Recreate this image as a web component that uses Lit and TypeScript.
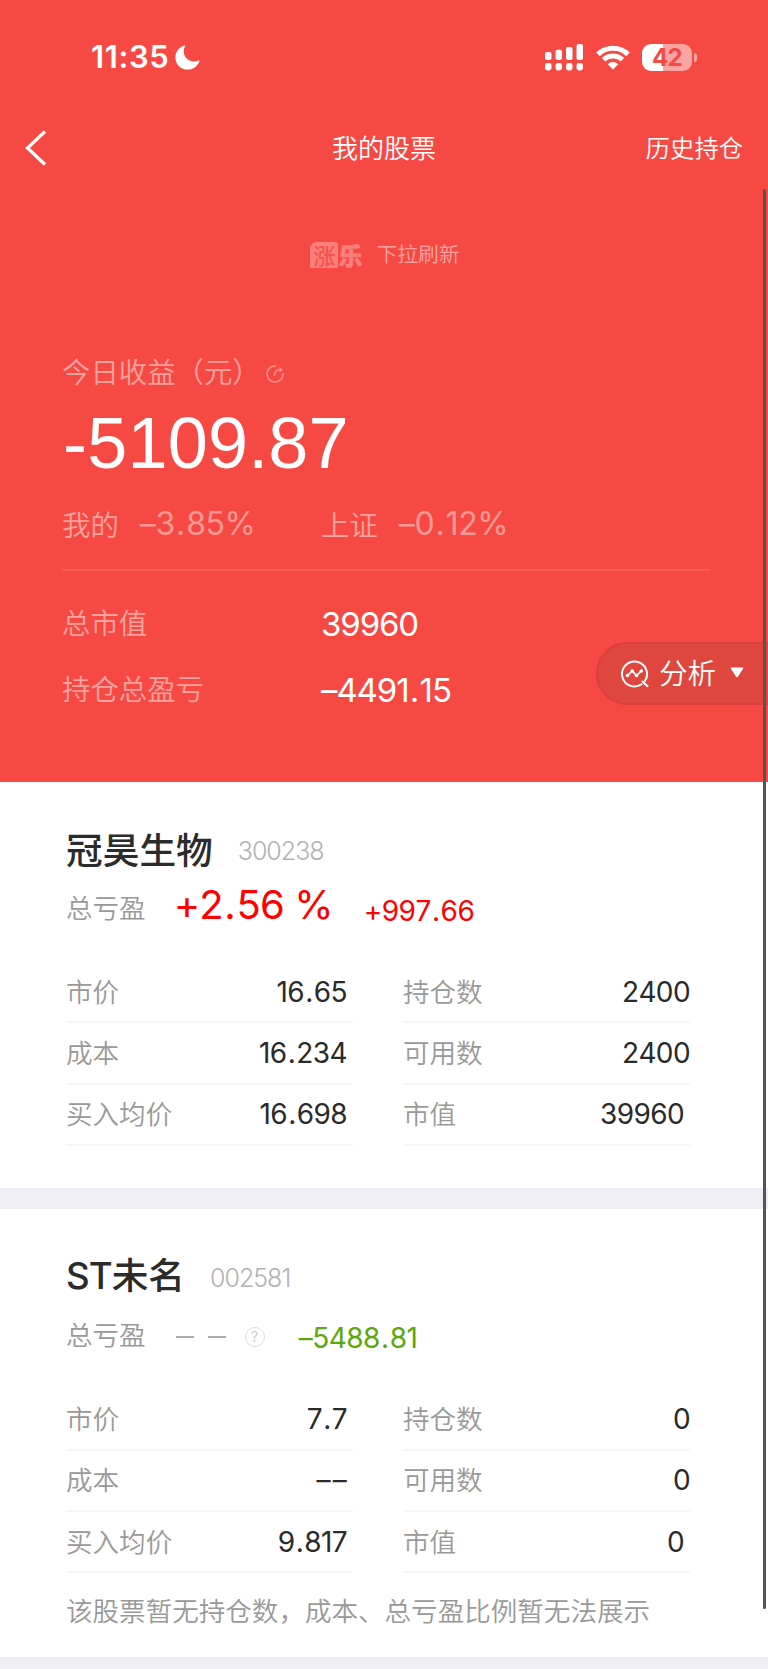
import { LitElement, html, css, svg } from "lit";
import { customElement, property } from "lit/decorators.js";
import { classMap } from "lit/directives/class-map.js";

interface Cell {
  label: string;
  value: string;
  inset?: boolean;
  empty?: boolean;
}

interface Holding {
  name: string;
  latin?: string;
  code: string;
  percent: string | null;
  amount: string;
  left: Cell[];
  right: Cell[];
  note?: string;
}

const HOLDINGS: Holding[] = [
  {
    name: "冠昊生物",
    code: "300238",
    percent: "+2.56 %",
    amount: "+997.66",
    left: [
      { label: "市价", value: "16.65" },
      { label: "成本", value: "16.234" },
      { label: "买入均价", value: "16.698" },
    ],
    right: [
      { label: "持仓数", value: "2400" },
      { label: "可用数", value: "2400" },
      { label: "市值", value: "39960", inset: true },
    ],
  },
  {
    latin: "ST",
    name: "未名",
    code: "002581",
    percent: null,
    amount: "–5488.81",
    left: [
      { label: "市价", value: "7.7" },
      { label: "成本", value: "––", empty: true },
      { label: "买入均价", value: "9.817" },
    ],
    right: [
      { label: "持仓数", value: "0" },
      { label: "可用数", value: "0" },
      { label: "市值", value: "0", inset: true },
    ],
    note: "该股票暂无持仓数，成本、总亏盈比例暂无法展示",
  },
];

const base = css`
  * {
    box-sizing: border-box;
  }
  :host {
    display: block;
    font-family: Inter, "Noto Sans CJK SC", sans-serif;
    font-kerning: none;
    white-space: nowrap;
  }
  svg {
    display: block;
    flex: none;
  }
  .zh {
    font-family: "Noto Sans CJK SC", sans-serif;
    font-weight: 350;
  }
  .dot {
    padding: 0 0.04em;
  }
`;

/** Splits a number at its decimal point so the point gets a little extra room. */
const num = (text: string) => {
  const [whole, fraction] = text.split(".");
  return fraction === undefined ? text : html`${whole}<span class="dot">.</span>${fraction}`;
};

@customElement("status-bar")
export class StatusBar extends LitElement {
  static styles = [
    base,
    css`
      .bar {
        height: 114px;
        padding: 0 71px 0 91px;
        display: flex;
        align-items: center;
        color: #fff;
      }
      .time {
        font-size: 31px;
        font-weight: 600;
        letter-spacing: 0.6px;
        line-height: 40px;
        width: 84px;
      }
      .grow {
        flex: 1;
      }
      .wifi {
        margin: 0 12px 0 13px;
      }
      .battery {
        width: 50px;
        height: 27px;
        border-radius: 9px;
        background: linear-gradient(90deg, #fff 21.5px, #fba4a1 21.5px);
        color: #f64944;
        font-size: 24px;
        font-weight: 700;
        line-height: 27px;
        text-align: center;
        letter-spacing: -0.6px;
      }
      .nub {
        width: 3px;
        height: 9px;
        margin-left: 2px;
        border-radius: 0 4px 4px 0;
        background: #fba4a1;
      }
    `,
  ];

  render() {
    const bars = [0, 1, 2, 3].map((i) => {
      const top = [8, 5.7, 3, 0][i];
      return svg`<rect x=${i * 10.5} y=${top} width="6.5" height=${16 - top} rx="2"/>
        <rect x=${i * 10.5} y="19" width="6.5" height="7.5" rx="2.4"/>`;
    });
    return html`<div class="bar">
      <span class="time">11:35</span>
      <svg width="25" height="25" viewBox="0 0 25 25" fill="#fff">
        <path d="M9.4 .5C4 2.3 .4 6.800 .4 12.400C.4 19.300 6 24.600 12.800 24.600C18.200 24.600 22.700 21.200 24.400 16.300C24.700 15.600 24.200 15.300 23.600 15.600C22.200 16.200 20.700 16.500 19.100 16.500C13.300 16.500 8.700 12 8.700 6.200C8.700 4.400 9.100 2.800 9.900 1.400C10.300 .7 10.100 .3 9.400 .5Z"/>
      </svg>
      <span class="grow"></span>
      <svg width="38" height="27" viewBox="0 0 38 27" fill="#fff">${bars}</svg>
      <svg class="wifi" width="34" height="25" viewBox="0 0 34 25" fill="none" stroke="#fff">
        <path d="M2 9.400A21.500 21.500 0 0 1 32 9.400" stroke-width="5"/>
        <path d="M7.600 14.800A13.500 13.500 0 0 1 26.400 14.800" stroke-width="4.800"/>
        <path d="M11.800 19.200A7.400 7.400 0 0 1 22.200 19.200L17 24.600Z" fill="#fff" stroke="none"/>
      </svg>
      <span class="battery">42</span><span class="nub"></span>
    </div>`;
  }
}

@customElement("profit-summary")
export class ProfitSummary extends LitElement {
  static styles = [
    base,
    css`
      .nav {
        height: 67px;
        display: grid;
        grid-template-columns: 1fr auto 1fr;
        align-items: center;
        padding: 0 25px;
        color: #fff;
      }
      .title {
        font-size: 26px;
        line-height: 36px;
        margin-top: -2px;
      }
      .history {
        justify-self: end;
        font-size: 24.300px;
        line-height: 36px;
        margin-top: -2px;
      }
      .pull {
        height: 30px;
        margin-top: 57px;
        padding-left: 2px;
        display: flex;
        justify-content: center;
        align-items: center;
        gap: 14px;
        color: rgba(255, 255, 255, 0.52);
        font-size: 20.800px;
        line-height: 30px;
      }
      .logo {
        display: flex;
        align-items: center;
        height: 26px;
        margin-top: 4px;
        font-weight: 900;
        color: #fa7f7b;
      }
      .stamp {
        width: 28px;
        height: 26px;
        border-radius: 7px 3px 1px 1px;
        background: #fa7f7b;
        font-size: 22px;
        line-height: 24px;
        text-align: center;
        font-weight: 500;
        color: #f6524d;
      }
      .mark {
        width: 24px;
        font-size: 24px;
        line-height: 22px;
        -webkit-text-stroke: 0.6px #fa7f7b;
      }
      .body {
        padding: 83px 58px 0 62px;
        color: rgba(255, 255, 255, 0.5);
        font-size: 28.400px;
        line-height: 40px;
      }
      .today {
        display: flex;
        align-items: center;
        height: 40px;
      }
      .refresh {
        margin: 5px 0 0 5px;
      }
      .total {
        height: 84px;
        padding: 19px 0 0 1px;
        font: 72px/84px "Liberation Sans", sans-serif;
        letter-spacing: 0.2px;
        color: #fff;
        display: flex;
        align-items: center;
      }
      .pair {
        display: grid;
        grid-template-columns: 259px 1fr;
        align-items: center;
      }
      .compare {
        height: 40px;
        margin-top: 28px;
      }
      .index {
        display: flex;
        align-items: center;
        gap: 21px;
      }
      .digits {
        font-size: 32px;
        letter-spacing: -0.4px;
        padding-top: 1px;
        color: rgba(255, 255, 255, 0.46);
      }
      .value {
        color: #fff;
        font-size: 33px;
        letter-spacing: -1.1px;
        padding-top: 4px;
      }
      .rule {
        height: 2px;
        margin: 26px 0 18px;
        background: rgba(255, 255, 255, 0.1);
      }
      .line {
        height: 66px;
      }
    `,
  ];

  render() {
    return html`
      <div class="nav">
        <svg width="22" height="36" viewBox="0 0 22 36" fill="none" stroke="#fff" stroke-width="3.200">
          <path d="M20 1.500L2.500 18L20 34.500"/>
        </svg>
        <span class="title zh">我的股票</span>
        <span class="history zh">历史持仓</span>
      </div>
      <div class="pull zh">
        <span class="logo"><span class="stamp">涨</span><span class="mark">乐</span></span>
        <span>下拉刷新</span>
      </div>
      <div class="body">
        <div class="today zh">
          <span>今日收益（元）</span>
          <svg class="refresh" width="18" height="18" viewBox="0 0 18 18" fill="none" stroke="#fff" stroke-opacity=".4" stroke-width="1.500">
            <path d="M10 1.100A8 8 0 1 0 16.900 8"/>
            <path d="M8.500 11C8.300 7 10.200 4.600 14.600 4.600"/>
            <path d="M13.500 2.400L17 4.700L13.700 7.200Z" fill="#fff" fill-opacity=".4" stroke="none"/>
          </svg>
        </div>
        <div class="total">-5109.87</div>
        <div class="pair compare">
          <div class="index"><span class="zh">我的</span><span class="digits">${num("–3.85%")}</span></div>
          <div class="index"><span class="zh">上证</span><span class="digits">${num("–0.12%")}</span></div>
        </div>
        <div class="rule"></div>
        <div class="pair line"><span class="zh">总市值</span><span class="value">39960</span></div>
        <div class="pair line"><span class="zh">持仓总盈亏</span><span class="value">${num("–4491.15")}</span></div>
      </div>
    `;
  }
}

@customElement("holding-card")
export class HoldingCard extends LitElement {
  @property({ attribute: false }) holding!: Holding;

  static styles = [
    base,
    css`
      .card {
        height: 406px;
        padding: 46px 78px 0 66px;
        background: #fff;
        font-size: 26.550px;
        color: #999;
      }
      .card.noted {
        height: 448.500px;
      }
      .head {
        height: 44px;
        display: flex;
        align-items: center;
        gap: 25px;
      }
      .name {
        color: #2b2b2b;
        font-size: 36.700px;
        line-height: 40px;
        font-weight: 500;
        margin-top: -4px;
      }
      .latin {
        font-family: Inter, sans-serif;
        letter-spacing: -1px;
      }
      .code {
        color: #b2b2b2;
        font-size: 25px;
        font-weight: 300;
        letter-spacing: -1px;
        padding-top: 2px;
      }
      .profit {
        height: 68px;
        display: flex;
        align-items: center;
        line-height: 36px;
        padding-top: 2px;
      }
      .percent {
        margin-left: 28px;
        width: 190px;
        color: #f00;
        font-size: 40px;
        letter-spacing: -0.9px;
        margin-top: -4px;
      }
      .amount {
        color: #f00;
        font-size: 28px;
        letter-spacing: -0.5px;
        margin-top: 8px;
      }
      .noted .amount {
        color: #5aa80a;
      }
      .blank {
        display: flex;
        align-items: center;
        width: 123px;
        margin-left: 30px;
        margin-top: 7px;
      }
      .dash {
        width: 18px;
        height: 2px;
        margin-right: 14px;
        background: #aaa;
      }
      .help {
        width: 20px;
        height: 20px;
        margin-left: 5px;
        border: 1.500px solid #ddd;
        border-radius: 50%;
        color: #ccc;
        font-size: 14px;
        line-height: 17px;
        text-align: center;
      }
      .grid {
        display: grid;
        grid-template-columns: 287px 287px;
        column-gap: 50px;
        margin-top: 22px;
      }
      .cell {
        height: 61.330px;
        display: flex;
        align-items: center;
        justify-content: space-between;
        border-bottom: 2px solid #f6f6f6;
        line-height: 40px;
      }
      .noted .grid {
        margin-top: 23px;
      }
      .left .cell {
        padding-right: 6px;
      }
      .cell.inset {
        padding-right: 6px;
      }
      .value {
        color: #2a2a2a;
        font-size: 28px;
        letter-spacing: -0.6px;
      }
      .empty .value {
        letter-spacing: 2.300px;
        margin-right: -2px;
      }
      .cell .zh {
        margin-top: -2px;
      }
      .note {
        padding-top: 17px;
        line-height: 40px;
      }
    `,
  ];

  private cell(c: Cell) {
    return html`<div class=${classMap({ cell: true, inset: !!c.inset, empty: !!c.empty })}>
      <span class="zh">${c.label}</span><span class="value">${num(c.value)}</span>
    </div>`;
  }

  render() {
    const h = this.holding;
    return html`<section class=${classMap({ card: true, noted: !!h.note })}>
      <div class="head">
        <span class="name zh">${h.latin ? html`<span class="latin">${h.latin}</span>` : ""}${h.name}</span>
        <span class="code">${h.code}</span>
      </div>
      <div class="profit">
        <span class="zh">总亏盈</span>
        ${h.percent
          ? html`<span class="percent">${num(h.percent)}</span>`
          : html`<span class="blank"><span class="dash"></span><span class="dash"></span><span class="help">?</span></span>`}
        <span class="amount">${num(h.amount)}</span>
      </div>
      <div class="grid">
        <div class="left">${h.left.map((c) => this.cell(c))}</div>
        <div class="right">${h.right.map((c) => this.cell(c))}</div>
      </div>
      ${h.note ? html`<div class="note zh">${h.note}</div>` : ""}
    </section>`;
  }
}

@customElement("app-root")
export class AppRoot extends LitElement {
  static styles = [
    base,
    css`
      :host {
        position: relative;
        width: 768px;
        height: 1669px;
        overflow: hidden;
        background: #efeef4;
      }
      .hero {
        height: 782px;
        background: #f64944;
      }
      .list {
        display: flex;
        flex-direction: column;
        gap: 20.500px;
      }
      .analyse {
        position: absolute;
        top: 642px;
        right: -2px;
        width: 174px;
        height: 63px;
        border: 2px solid #d9403c;
        border-radius: 32px 0 0 32px;
        background: #df463e;
        display: flex;
        align-items: center;
        padding-left: 23px;
        gap: 10px;
        color: #fff;
        font-size: 28.500px;
        line-height: 40px;
      }
      .analyse .zh {
        margin-top: -3px;
      }
      .caret {
        margin-left: 4px;
        margin-top: -2px;
      }
      .scroll {
        position: absolute;
        top: 189px;
        right: 2px;
        width: 3.500px;
        height: 1420px;
        border-radius: 2px;
        background: #555;
      }
    `,
  ];

  render() {
    return html`
      <div class="hero">
        <status-bar></status-bar>
        <profit-summary></profit-summary>
      </div>
      <div class="list">${HOLDINGS.map((h) => html`<holding-card .holding=${h}></holding-card>`)}</div>
      <div class="analyse">
        <svg width="28" height="28" viewBox="0 0 28 28" fill="none" stroke="#fff" stroke-width="2">
          <path d="M20.600 24.300A12.500 12.500 0 1 1 24 20.800M21.500 21.500L26.500 26.300" stroke-linecap="round"/>
          <path d="M6.500 15.500L11.200 11L15.500 15.500L20.300 11" stroke-width="1.700"/>
          <g fill="#fff" stroke="none">
            <circle cx="6.500" cy="15.500" r="1.800"/><circle cx="11.200" cy="11" r="1.800"/>
            <circle cx="15.500" cy="15.500" r="1.800"/><circle cx="20.300" cy="11" r="1.800"/>
          </g>
        </svg>
        <span class="zh">分析</span>
        <svg class="caret" width="14" height="11" viewBox="0 0 14 11" fill="#fff">
          <path d="M1.500 .5H12.500Q13.800 .6 13 1.800L7.900 9.800Q7 10.800 6.100 9.800L1 1.800Q.3 .6 1.500 .5Z"/>
        </svg>
      </div>
      <div class="scroll"></div>
    `;
  }
}
